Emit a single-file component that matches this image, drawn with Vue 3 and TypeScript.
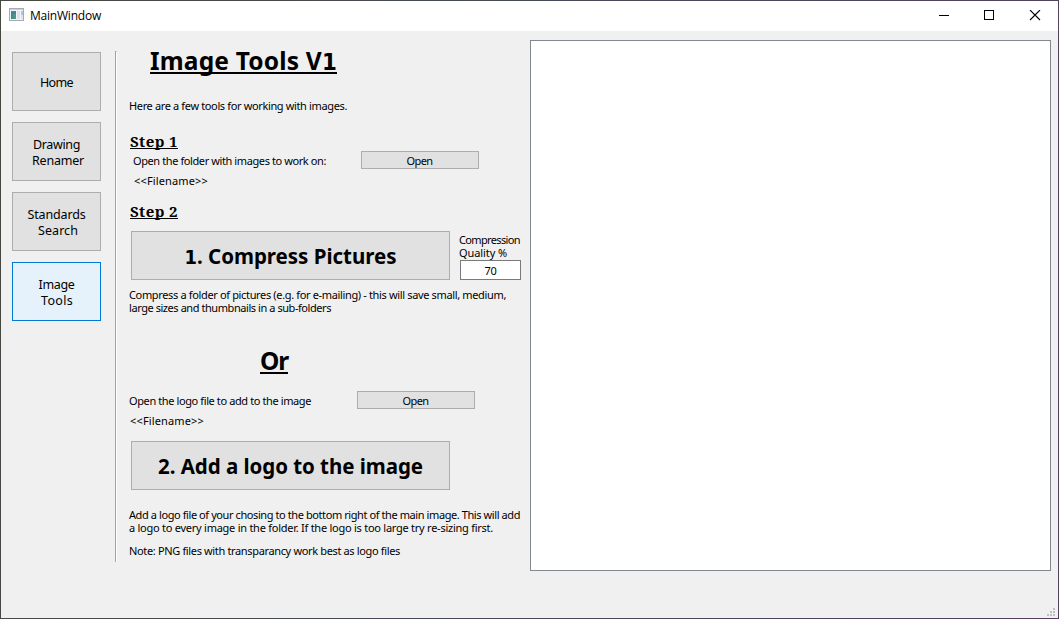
<script setup lang="ts">
import type { Directive } from 'vue'

interface NavItem { lines: string[]; width: number[]; active?: boolean }

const nav: NavItem[] = [
  { lines: ['Home'], width: [33] },
  { lines: ['Drawing', 'Renamer'], width: [47, 52] },
  { lines: ['Standards', 'Search'], width: [58, 40] },
  { lines: ['Image', 'Tools'], width: [36, 32], active: true },
]

// Tracks a label so that its advance width equals the given pixel width.
const vFit: Directive<HTMLElement, number> = {
  mounted(el, { value }) {
    const chars = el.textContent?.length ?? 1
    const natural = el.getBoundingClientRect().width
    el.style.letterSpacing = `${(value - natural) / chars}px`
  },
}
</script>

<template>
  <div class="window">
    <header class="titlebar">
      <svg class="app-icon" width="16" height="14" viewBox="0 0 16 14">
        <rect x="0.5" y="0.5" width="14" height="12" fill="#f1f3f5" stroke="#a5abb2" />
        <rect x="1" y="1" width="13" height="1" fill="#cbd1d8" />
        <rect x="2" y="3" width="5" height="8" fill="#3f8a8c" />
        <rect x="2" y="3" width="5" height="3" fill="#4c7fae" />
        <rect x="4" y="6" width="3" height="5" fill="#4c9a78" />
        <rect x="8" y="3" width="3" height="8" fill="#dfe3e7" />
        <rect x="12" y="3" width="2" height="4" fill="#a9c8d8" />
        <rect x="12" y="7" width="2" height="4" fill="#e0e4e8" />
      </svg>
      <span class="caption"><span v-fit="71">MainWindow</span></span>
      <svg class="controls" width="106" height="12" viewBox="0 0 106 12" fill="none" stroke="#000" shape-rendering="crispEdges">
        <path d="M0 5.5H10" />
        <rect x="45.5" y="0.5" width="9" height="9" />
        <path d="M91 0L101 10M101 0L91 10" shape-rendering="auto" stroke-width="1.1" />
      </svg>
    </header>

    <div class="body">
      <nav class="nav">
        <button v-for="item in nav" :key="item.lines[0]" class="btn nav-btn" :class="{ active: item.active }">
          <span v-for="(line, i) in item.lines" :key="line" class="nav-line" :class="{ second: i === 1 }">
            <span v-fit="item.width[i]">{{ line }}</span>
          </span>
        </button>
      </nav>
      <div class="divider"></div>

      <main class="tools">
        <h1 class="title"><span v-fit="187">Image Tools V<b class="one">1</b></span></h1>
        <p class="intro"><span v-fit="218">Here are a few tools for working with images.</span></p>

        <h2 class="step"><span v-fit="48">Step 1</span></h2>
        <div class="row folder">
          <span v-fit="193">Open the folder with images to work on:</span>
          <button class="btn open"><span v-fit="26">Open</span></button>
        </div>
        <p class="filename"><span v-fit="74">&lt;&lt;Filename&gt;&gt;</span></p>

        <h2 class="step two"><span v-fit="48">Step 2</span></h2>
        <div class="row compress">
          <button class="btn big"><span v-fit="212"><b class="one">1</b>. Compress Pictures</span></button>
          <div class="quality">
            <span class="ql"><span v-fit="61">Compression</span></span>
            <span class="ql"><span v-fit="48">Quality %</span></span>
            <div class="field"><span v-fit="12">70</span></div>
          </div>
        </div>
        <p class="para help">
          <span v-fit="377">Compress a folder of pictures (e.g. for e-mailing) - this will save small, medium,</span><br />
          <span v-fit="202">large sizes and thumbnails in a sub-folders</span>
        </p>

        <h1 class="or"><span v-fit="28">Or</span></h1>
        <div class="row logo">
          <span v-fit="182">Open the logo file to add to the image</span>
          <button class="btn open"><span v-fit="26">Open</span></button>
        </div>
        <p class="filename logo-name"><span v-fit="74">&lt;&lt;Filename&gt;&gt;</span></p>
        <button class="btn big add"><span v-fit="265">2. Add a logo to the image</span></button>
        <p class="para add-help">
          <span v-fit="391">Add a logo file of your chosing to the bottom right of the main image. This will add</span><br />
          <span v-fit="364">a logo to every image in the folder. If the logo is too large try re-sizing first.</span>
        </p>
        <p class="para note"><span v-fit="271">Note: PNG files with transparancy work best as logo files</span></p>
      </main>

      <section class="preview"></section>
    </div>

    <svg class="grip" width="8" height="8" viewBox="0 0 8 8" fill="#bfbfbf">
      <path d="M6 0h2v2h-2zM3 3h2v2h-2zM6 3h2v2h-2zM0 6h2v2h-2zM3 6h2v2h-2zM6 6h2v2h-2z" />
    </svg>
  </div>
</template>

<style>
body { margin: 0; overflow: hidden; }
</style>

<style scoped>
* { box-sizing: border-box; }
.window {
  position: relative;
  width: 1059px;
  height: 619px;
  display: flex;
  flex-direction: column;
  background: #f0f0f0;
  border: 1px solid #4a4148;
  border-image: linear-gradient(100deg, #45483f, #474b58 45%, #54405c) 1;
  font: 11px/13px "Noto Sans", sans-serif;
  color: #000;
  white-space: nowrap;
}
h1, h2, p { margin: 0; }
.titlebar { height: 30px; flex: none; display: flex; background: #fff; padding-left: 8px; }
.app-icon { margin-top: 7px; }
.caption { margin-left: 5px; font: 12px/30px "Open Sans", sans-serif; }
.controls { margin: 9px 13px 0 auto; }
.body { display: flex; height: 587px; }
.nav { display: flex; flex-direction: column; gap: 11px; padding: 21px 0 0 11px; }
.btn {
  display: flex;
  align-items: center;
  justify-content: center;
  margin: 0;
  padding: 0;
  color: #000;
  font: inherit;
  background: #e1e1e1;
  border: 1px solid #adadad;
}
.nav-btn { width: 89px; height: 59px; flex-direction: column; font-size: 12.5px; line-height: 16px; padding-top: 3px; }
.nav-btn.active { background: #e5f1fb; border-color: #0078d7; }
.nav-line.second { padding-left: 3px; }
.nav-btn.active .second { padding-left: 1px; }
.divider { width: 2px; height: 511px; margin: 20px 0 0 14px; border-left: 1px solid #a0a0a0; border-right: 1px solid #fff; border-top: 1px solid #a0a0a0; }
.tools { width: 401px; margin-left: 12px; }
.one { font-family: "DejaVu Sans Condensed", "DejaVu Sans", sans-serif; font-stretch: condensed; font-size: 0.97em; line-height: 0; }
.title, .or { font-size: 24.5px; line-height: 30px; font-weight: 700; }
.title span, .or span, .step span { border-bottom: 2px solid #000; display: inline-block; }
.title span, .or span { height: 28px; }
.title { padding: 15px 0 0 21px; height: 68px; }
.intro { height: 33px; }
.step { font: 700 15px/18px "Noto Serif", "DejaVu Serif", serif; height: 19px; padding-left: 1px; }
.step span { border-bottom-width: 1px; height: 17px; }
.row { display: flex; }
.folder { padding-left: 4px; line-height: 20px; height: 22px; }
.open { width: 118px; height: 18px; margin: 0 0 0 35px; line-height: 16px; padding: 2px 1px 0 0; }
.filename { padding-left: 5px; height: 29px; line-height: 15px; }
.step.two { height: 29px; }
.compress { padding-left: 2px; height: 57px; }
.big { width: 319px; height: 49px; font-size: 20.5px; font-weight: 700; line-height: 26px; padding-top: 1px; }
.quality { width: 62px; margin: 2px 0 0 9px; display: flex; flex-direction: column; }
.ql { height: 13px; }
.field { height: 20px; margin: 1px 0 0 1px; background: #fff; border: 1px solid #7a7a7a; text-align: center; line-height: 20px; width: 61px; }
.help { height: 58px; }
.or { padding-left: 131px; height: 45px; }
.logo { height: 21px; line-height: 20px; }
.logo .open { margin-left: 46px; }
.logo-name { padding-left: 1px; line-height: 17px; }
.add { margin-left: 2px; }
.add-help { margin-top: 18px; height: 36px; }
.preview { width: 521px; height: 531px; margin: 9px 0 0 0; background: #fff; border: 1px solid #828790; }
.grip { position: absolute; right: 3px; bottom: 2px; }
</style>
